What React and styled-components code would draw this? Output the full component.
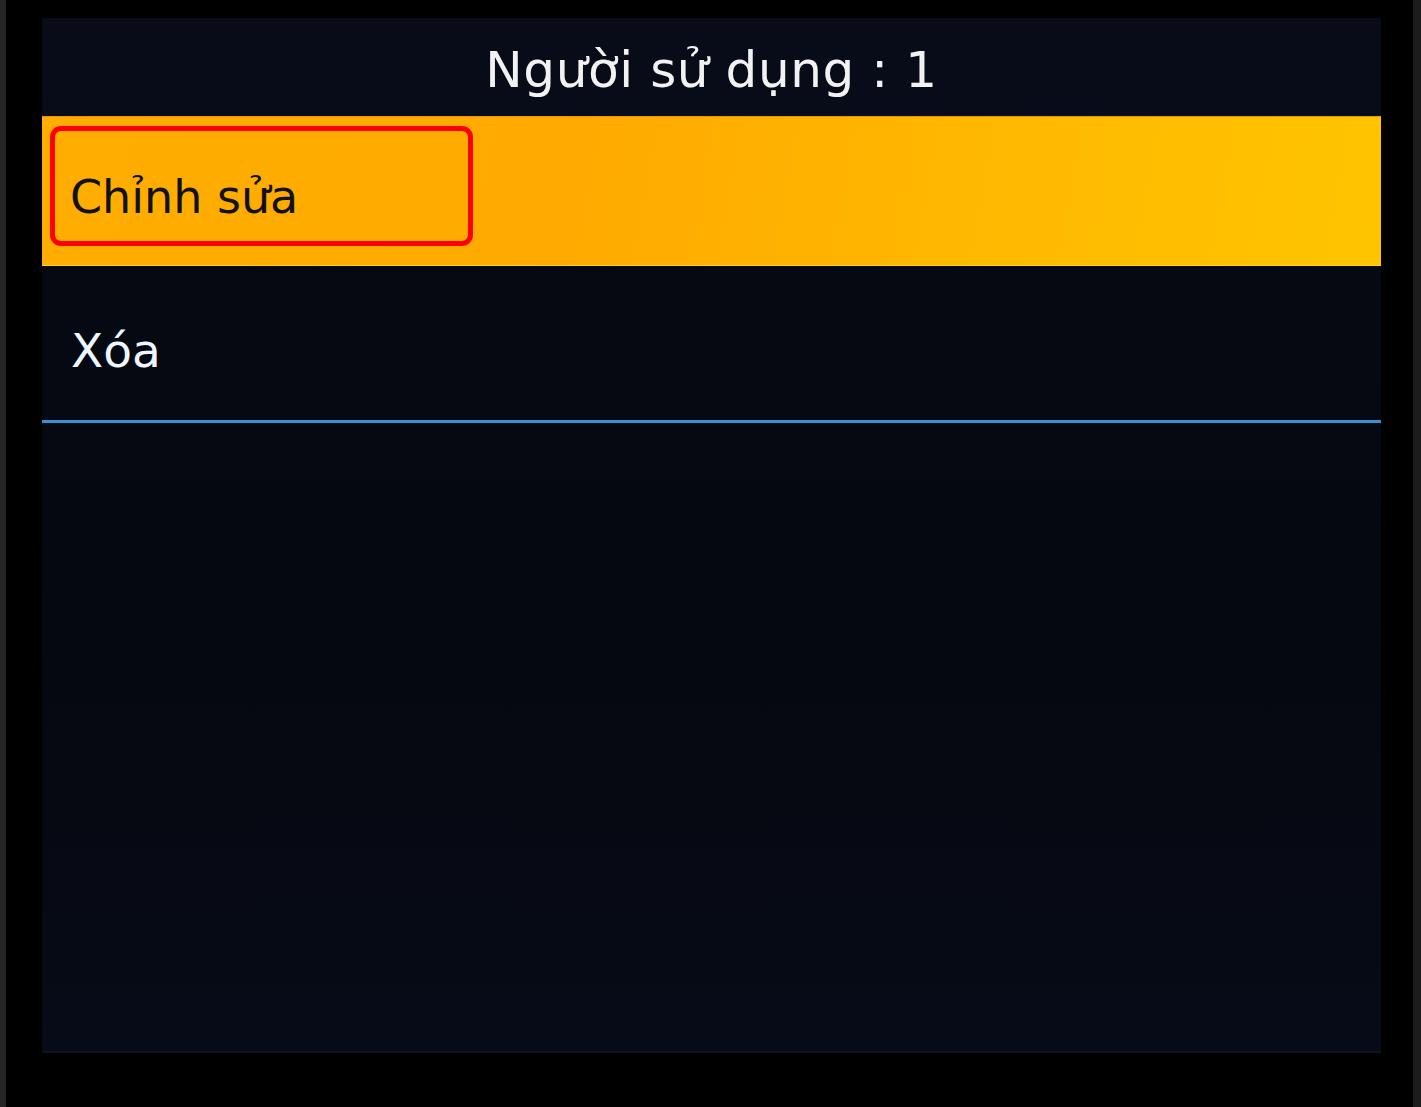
import React from "react";
import styled, { createGlobalStyle } from "styled-components";

const Global = createGlobalStyle`
  html, body {
    margin: 0;
    padding: 0;
    background: #000;
  }
  body {
    font-family: "DejaVu Sans", Verdana, sans-serif;
  }
`;

const Screen = styled.div`
  width: 1421px;
  height: 1107px;
  box-sizing: border-box;
  background: #000;
  border-left: 6px solid #262626;
  border-right: 8px solid #1c1c1c;
  padding: 18px 32px 0 36px;
`;

const Panel = styled.div`
  width: 1339px;
  height: 1035px;
  display: flex;
  flex-direction: column;
  background: linear-gradient(180deg, #060a14 0%, #05080f 60%, #070b17 100%);
  border-bottom: 2px solid #10141c;
  box-sizing: border-box;
`;

const Header = styled.div`
  height: 98px;
  display: flex;
  align-items: center;
  justify-content: center;
  color: #f2f2f2;
  font-size: 50px;
  letter-spacing: 0.6px;
  padding-top: 6px;
  box-sizing: border-box;
  background: #070c18;
`;

const Row = styled.div`
  height: ${(p) => p.$h}px;
  box-sizing: border-box;
  display: flex;
  align-items: center;
  font-size: ${(p) => (p.$active ? 46 : 47)}px;
  color: ${(p) => (p.$active ? "#111" : "#eef6ff")};
  background: ${(p) =>
    p.$active
      ? "linear-gradient(100deg, #ffad00 0%, #ffaa00 40%, #ffbb00 75%, #ffc400 100%)"
      : "transparent"};
  border-top: ${(p) => (p.$active ? "1px solid #e89400" : "none")};
  border-bottom: ${(p) =>
    p.$active ? "1px solid #ffd21a" : "3px solid #3a8fd6"};
  padding: ${(p) => (p.$active ? "9px 0 19px 8px" : "14px 0 0 29px")};
`;

const Highlight = styled.div`
  width: 423px;
  height: 120px;
  box-sizing: border-box;
  border: 5px solid #ff0000;
  border-radius: 11px;
  display: flex;
  align-items: center;
  padding: 21px 0 0 15px;
`;

const Label = styled.span`
  line-height: 1;
`;

export default function App() {
  return (
    <>
      <Global />
      <Screen>
        <Panel>
          <Header>Người sử dụng : 1</Header>
          <Row $active $h={150}>
            <Highlight>
              <Label>Chỉnh sửa</Label>
            </Highlight>
          </Row>
          <Row $h={157}>
            <Label>Xóa</Label>
          </Row>
        </Panel>
      </Screen>
    </>
  );
}
